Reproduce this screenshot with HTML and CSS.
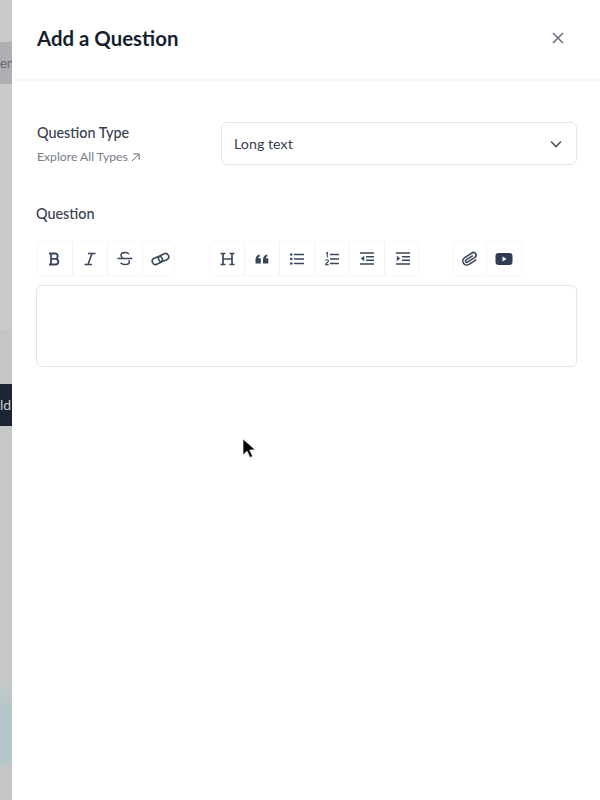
FILE: index.html
```html
<!DOCTYPE html>
<html lang="en">
<head>
<meta charset="utf-8">
<title>Add a Question</title>
<link rel="stylesheet" href="styles.css">
</head>
<body>
<div class="screen">
  <aside class="backdrop">
    <div class="bd bd-a"></div>
    <div class="bd bd-tab"><span class="bd-text">en</span></div>
    <div class="bd bd-b"></div>
    <div class="bd bd-c"></div>
    <div class="bd bd-btn"><span class="bd-text">ld</span></div>
    <div class="bd bd-d"></div>
    <div class="bd bd-teal"></div>
    <div class="bd bd-e"></div>
  </aside>
  <main class="panel">
    <header class="head">
      <h1 class="title">Add a Question</h1>
      <svg class="close" width="14" height="14" viewBox="0 0 14 14"><path d="M2 2l10 10M12 2L2 12" fill="none" stroke="#636b78" stroke-width="1.5"/></svg>
    </header>
    <section class="body">
      <div class="type-row">
        <div class="type-label">
          <div class="label">Question Type</div>
          <div class="explore">Explore All Types
            <svg class="ext" width="9" height="9" viewBox="0 0 10 10"><path d="M1 9l7.500-7.500M2.500 1H9v6.500" fill="none" stroke="#636b78" stroke-width="1.1"/></svg>
          </div>
        </div>
        <div class="select">
          <span class="select-text">Long text</span>
          <svg width="12" height="8" viewBox="0 0 12 8"><path d="M1 1.500l5 5 5-5" fill="none" stroke="#4a5365" stroke-width="1.6"/></svg>
        </div>
      </div>
      <div class="label q-label">Question</div>
      <div class="toolbar">
        <div class="group g1">
          <div class="tool"><svg width="14" height="14" viewBox="0 0 14 14"><path d="M1 1.500h6.500a2.700 2.700 0 0 1 0 5.300H3M3 6.800h5a2.900 2.900 0 0 1 0 5.700H1M3 1.500v11" fill="none" stroke="#39465c" stroke-width="1.800"/></svg></div>
          <div class="tool"><svg width="14" height="14" viewBox="0 0 14 14"><path d="M5 1.500h7.500M1.500 12.500H9M9 1.500l-4 11" fill="none" stroke="#39465c" stroke-width="1.600"/></svg></div>
          <div class="tool"><svg width="16" height="15" viewBox="0 0 16 15"><path d="M.5 7.500h15M12 3c-.8-1-2.200-1.500-4-1.500-2.300 0-4 1-4 2.700 0 1 .5 1.800 1.500 2.300M11.700 9.300c.4.500.6 1 .6 1.500 0 1.800-1.800 2.800-4.300 2.800-2 0-3.500-.6-4.400-1.800" fill="none" stroke="#39465c" stroke-width="1.500"/></svg></div>
          <div class="tool"><svg width="19" height="16" viewBox="0 0 19 16"><g fill="none" stroke="#39465c" stroke-width="1.600" transform="rotate(-24 9.500 8)"><rect x=".8" y="4.800" width="10.500" height="6.400" rx="3.200"/><rect x="7.700" y="4.800" width="10.500" height="6.400" rx="3.200"/></g></svg></div>
        </div>
        <div class="group g2">
          <div class="tool"><svg width="15" height="14" viewBox="0 0 15 14"><path d="M.5 1.500h5M3 1.500v11M.5 12.500h5M9.500 1.500h5M12 1.500v11M9.500 12.500h5M3 7h9" fill="none" stroke="#39465c" stroke-width="1.700"/></svg></div>
          <div class="tool"><svg width="14" height="12" viewBox="0 0 14 12"><path d="M.5 6.500C.5 3.800 2 2 4.800 1.500v2C3.700 3.900 3.200 4.500 3.100 5.200h2.700v5.300H.5zM8 6.500C8 3.800 9.500 2 12.300 1.500v2c-1.100.4-1.600 1-1.700 1.700h2.700v5.300H8z" fill="#39465c"/></svg></div>
          <div class="tool"><svg width="14" height="12" viewBox="0 0 14 12"><path d="M4 1.500h10M4 6h10M4 10.500h10" fill="none" stroke="#39465c" stroke-width="1.700"/><circle cx="1.300" cy="1.500" r="1.300" fill="#39465c"/><circle cx="1.300" cy="6" r="1.300" fill="#39465c"/><circle cx="1.300" cy="10.500" r="1.300" fill="#39465c"/></svg></div>
          <div class="tool"><svg width="14" height="14" viewBox="0 0 14 14"><path d="M5 2.500h9M5 7h9M5 11.500h9" fill="none" stroke="#39465c" stroke-width="1.700"/><path d="M1 1.200l1.300-.7v5M.6 8.500c.5-1 2.900-1 2.900.5 0 1-2.400 2-2.900 3.600h3.100" fill="none" stroke="#39465c" stroke-width="1.100"/></svg></div>
          <div class="tool"><svg width="14" height="13" viewBox="0 0 14 13"><path d="M0 1h14M6 4.700h8M6 8.300h8M0 12h14" fill="none" stroke="#39465c" stroke-width="1.600"/><path d="M4.200 3.800v5.400L.8 6.500z" fill="#39465c"/></svg></div>
          <div class="tool"><svg width="14" height="13" viewBox="0 0 14 13"><path d="M0 1h14M6 4.700h8M6 8.300h8M0 12h14" fill="none" stroke="#39465c" stroke-width="1.600"/><path d="M.8 3.800v5.400l3.400-2.700z" fill="#39465c"/></svg></div>
        </div>
        <div class="group g3">
          <div class="tool"><svg width="16" height="16" viewBox="0 0 24 24"><path d="M21.440 11.050l-9.190 9.190a6 6 0 0 1-8.490-8.490l9.190-9.190a4 4 0 0 1 5.660 5.660l-9.200 9.190a2 2 0 0 1-2.830-2.830l8.490-8.480" fill="none" stroke="#39465c" stroke-width="2.400" transform="rotate(12 12 12)"/></svg></div>
          <div class="tool"><svg width="18" height="14" viewBox="0 0 18 14"><rect x=".5" y="1" width="17" height="12" rx="3.200" fill="#2f3c55"/><path d="M7.500 4.500v5l4-2.500z" fill="#fff"/></svg></div>
        </div>
      </div>
      <div class="editor"></div>
    </section>
    <svg class="cursor" width="16" height="22" viewBox="0 0 16 22"><path d="M1 1v16l4-3.800 3 6.300 2.700-1.200-3-6.200 5.500-.3z" fill="#000" stroke="#e8e8e8" stroke-width="0.800"/></svg>
  </main>
</div>
</body>
</html>
```

FILE: styles.css
```css
* { box-sizing: border-box; }
html, body { margin: 0; padding: 0; }
body {
  width: 600px;
  height: 800px;
  overflow: hidden;
  background: #fff;
  font-family: Lato, "Open Sans", sans-serif;
  color: #2f3a4d;
}
.screen { display: flex; width: 600px; height: 800px; }

.backdrop { width: 12px; flex: none; display: flex; flex-direction: column; background: #c6c8c8; overflow: hidden; }
.bd { flex: none; width: 100%; }
.bd-a { height: 42px; background: #c8c9c9; }
.bd-tab { height: 42px; background: #aeb0b3; display: flex; align-items: center; justify-content: flex-start; }
.bd-b { height: 246px; background: #c9caca; }
.bd-c { height: 54px; background: #c4c6c6; }
.bd-btn { height: 42px; background: #1a2433; display: flex; align-items: center; justify-content: flex-start; color: #c9ccd1; }
.bd-d { height: 258px; background: #c6c8c8; }
.bd-teal { height: 84px; background: linear-gradient(#c4c8c9, #b2c6c9 30%, #b2c6c9 90%, #c2c5c5); }
.bd-e { flex: 1; height: 32px; background: #c4c6c6; }
.bd-text { display: block; width: 12px; overflow: hidden; font-size: 14px; line-height: 16px; white-space: nowrap; }
.bd-tab .bd-text { color: #63676c; font-size: 13px; }

.panel { position: relative; flex: 1; background: #fff; }
.head {
  height: 81px;
  padding: 0 35px 4px 25px;
  display: flex;
  align-items: center;
  justify-content: space-between;
  border-bottom: 2px solid #f6f6f7;
}
.title { margin: 0; font-size: 20.4px; line-height: 28px; font-weight: 700; color: #171f2e; }
.close { display: block; }

.body { padding: 41px 23px 0 25px; }
.type-row { display: flex; justify-content: space-between; height: 43px; }
.type-label { padding-top: 2px; }
.label { font-size: 14.4px; line-height: 18px; font-weight: 500; color: #36404f; }
.explore { margin-top: 7px; font-size: 12.2px; line-height: 16px; color: #767c89; display: flex; align-items: center; gap: 3px; }
.ext { display: block; }
.select {
  width: 356px;
  height: 43px;
  padding: 0 14px 0 12px;
  display: flex;
  align-items: center;
  justify-content: space-between;
  border: 1px solid #e3e4e6;
  border-radius: 6px;
  font-size: 14.3px;
  color: #36404f;
}
.select-text { padding-bottom: 1px; }

.q-label { margin-top: 40px; margin-left: -1px; }
.toolbar { margin-top: 18px; display: flex; height: 35px; }
.group { display: flex; height: 35px; border: 1px solid #f6f6f7; border-radius: 3px; }
.g1 { width: 138px; }
.g2 { width: 210px; margin-left: 34px; }
.g3 { width: 69px; margin-left: 34px; }
.g3 .tool { width: 33px; }
.tool {
  width: 35px;
  flex: none;
  display: flex;
  align-items: center;
  justify-content: center;
  border-right: 1px solid #f2f2f3;
}
.tool:last-child { border-right: 0; }
.editor {
  margin-top: 9px;
  margin-left: -1px;
  height: 82px;
  border: 1px solid #e3e4e6;
  border-radius: 6px;
}
.cursor { position: absolute; left: 230px; top: 438px; display: block; }
```
